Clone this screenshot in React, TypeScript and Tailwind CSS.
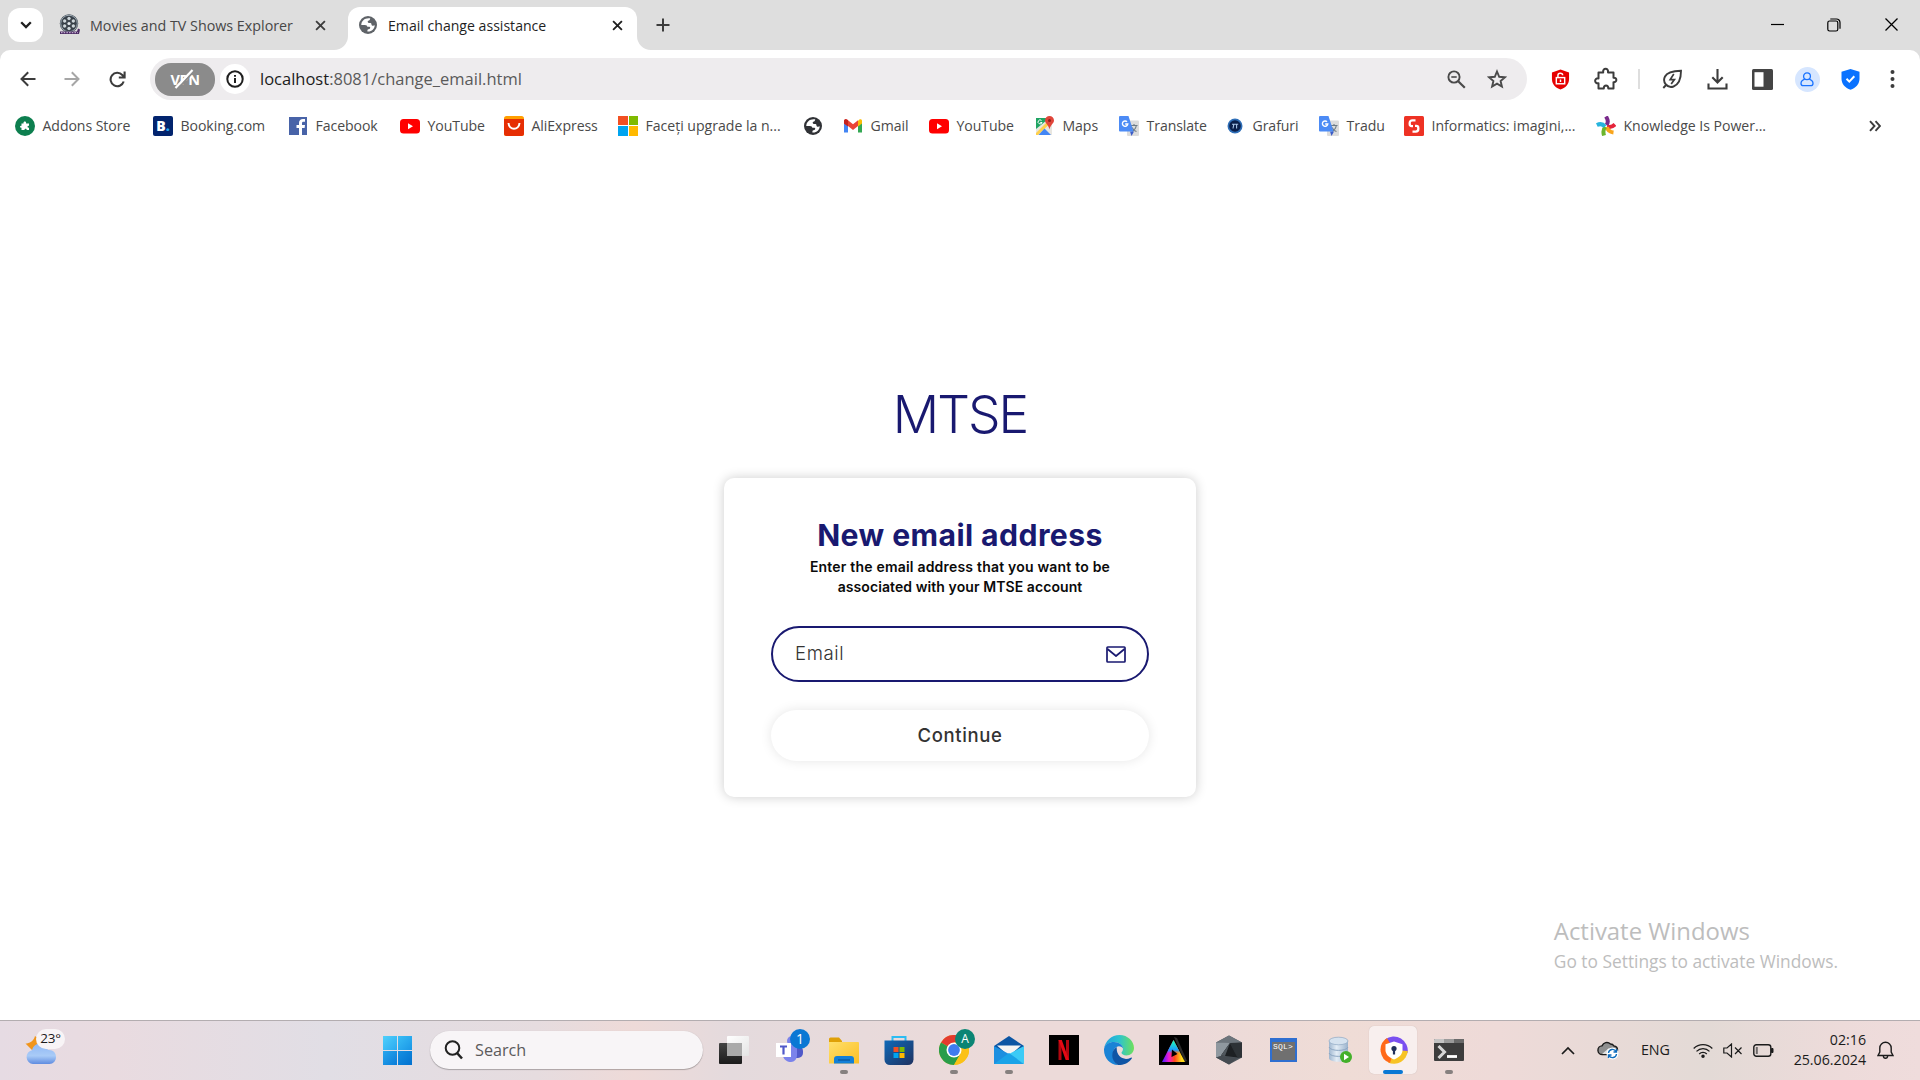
import type { ReactNode } from "react";

function Globe({ color, size }: { color: string; size: number }) {
  return (
    <svg width={size} height={size} viewBox="0 0 20 20">
      <circle cx="10" cy="10" r="10" fill={color} />
      <path d="M12.500 2.600C7 1.600 2.600 5 2.500 10H6.500c2 0 2.500.8 2.700 2h2.300c1.300 0 1.300 2.300 0 2.400-1.700.1-2.200.6-2.200 2.900 4.500.5 8-2.700 8.200-7-1.500.7-3.500.7-3.700-1.200-.1-1.300-.9-1.400-2.300-1.300-2.300.1-2.500-2.500-.5-2.800 1-.1 1.200-1.100 1.500-2.400z" fill="#fff" />
    </svg>
  );
}

function Reel() {
  return (
    <svg width="22" height="22" viewBox="0 0 22 22">
      <circle cx="10" cy="9.500" r="9.200" fill="#3c4650" />
      <circle cx="10" cy="9.500" r="8.300" fill="none" stroke="#a9b6be" strokeWidth=".9" />
      {[30, 90, 150, 210, 270, 330].map((a) => (
        <circle key={a} cx={10 + 5 * Math.cos((a * Math.PI) / 180)} cy={9.5 + 5 * Math.sin((a * Math.PI) / 180)} r="2.100" fill="#cdd6db" stroke="#20262c" strokeWidth=".6" />
      ))}
      <circle cx="10" cy="9.500" r="1.600" fill="#e6ecef" />
      <path d="M1 17.500h17l1-3 2 1-1 4.500H1z" fill="#4b2a63" />
      <path d="M2 18.700h17" stroke="#d9c6e6" strokeWidth="1" strokeDasharray="1.500 1.200" />
    </svg>
  );
}

function Cross({ size, color, w }: { size: number; color: string; w: number }) {
  return (
    <svg width={size} height={size} viewBox="0 0 12 12">
      <path d="M1.200 1.200l9.600 9.600M10.800 1.200L1.200 10.800" stroke={color} strokeWidth={w} fill="none" />
    </svg>
  );
}

function TabStrip() {
  return (
    <div className="flex h-[50px] w-full bg-[#dedede]">
      <div className="mt-2 ml-2 flex h-[34px] w-[35px] items-center justify-center rounded-xl bg-white">
        <svg width="12" height="8" viewBox="0 0 12 8">
          <path d="M1.200 1.200L6 6l4.800-4.800" stroke="#1f1f1f" strokeWidth="2.300" fill="none" />
        </svg>
      </div>
      <div className="flex h-[50px] w-[305px] items-center pl-[16px]">
        <Reel />
        <span className="ml-[9px] w-[216px] pt-[1px] text-[14.3px] text-[#474747]">Movies and TV Shows Explorer</span>
        <span className="ml-[9px]"><Cross size={11} color="#3c3c3c" w={2} /></span>
      </div>
      <div className="relative flex h-[50px] w-[289px] items-center pl-[11px]">
        <div className="absolute top-[7px] left-0 h-[43px] w-[289px] rounded-t-[12px] bg-white" />
        <svg className="absolute bottom-0 -left-[14px]" width="14" height="14" viewBox="0 0 14 14"><path d="M14 0v14H0A14 14 0 0 0 14 0z" fill="#fff" /></svg>
        <svg className="absolute -right-[14px] bottom-0" width="14" height="14" viewBox="0 0 14 14"><path d="M0 0v14h14A14 14 0 0 1 0 0z" fill="#fff" /></svg>
        <span className="relative"><Globe color="#5f6368" size={18} /></span>
        <span className="relative ml-[11px] w-[224px] pt-[1px] text-[14.1px] text-[#1f1f1f]">Email change assistance</span>
        <span className="relative"><Cross size={11} color="#1f1f1f" w={2} /></span>
      </div>
      <div className="ml-[19px] flex items-center">
        <svg width="14" height="14" viewBox="0 0 14 14"><path d="M7 .500v13M.500 7h13" stroke="#3c3c3c" strokeWidth="2" /></svg>
      </div>
      <div className="ml-auto flex items-center pr-[21px] pb-[1px]">
        <svg width="13" height="13" viewBox="0 0 13 13"><path d="M0 6.500h13" stroke="#000" strokeWidth="1.200" /></svg>
        <svg className="ml-[43px]" width="14" height="14" viewBox="0 0 14 14" fill="none" stroke="#000" strokeWidth="1.200">
          <rect x=".800" y="3" width="10" height="10" rx="1.800" />
          <path d="M3.300 1h6.200a3.500 3.500 0 0 1 3.500 3.500v6.200" />
        </svg>
        <span className="ml-[43px]"><Cross size={15} color="#000" w={1} /></span>
      </div>
    </div>
  );
}

function Toolbar() {
  return (
    <div className="flex h-[58px] items-start bg-[#dedede]">
      <div className="flex h-[58px] w-full items-start rounded-t-[10px] bg-white pt-2">
        <div className="flex h-[42px] w-[150px] items-center pl-[20px]">
          <svg width="16" height="16" viewBox="0 0 16 16" fill="none" stroke="#3c3c3c" strokeWidth="2"><path d="M15.500 8H1.700M8.200 1.200L1.500 8l6.700 6.800" /></svg>
          <svg className="ml-[28px]" width="16" height="16" viewBox="0 0 16 16" fill="none" stroke="#a6a6a6" strokeWidth="2"><path d="M.500 8h13.800M7.800 1.200L14.500 8l-6.700 6.800" /></svg>
          <svg className="ml-[29px]" width="17" height="17" viewBox="0 0 17 17" fill="none" stroke="#3c3c3c" strokeWidth="2.100"><path d="M14.700 10.500A6.700 6.700 0 1 1 13.300 4L15.300 6M15.600.500v6H9.800" /></svg>
        </div>
        <div className="flex h-[42px] w-[1377px] items-center rounded-full bg-[#eeecee] pl-[5px]">
          <div className="flex h-[33px] w-[60px] items-center justify-center rounded-[16px] bg-[#8b8b8b]">
            <div className="relative pt-[2px] text-[14.5px] leading-none font-bold tracking-[-0.4px] text-white">
              VPN
              <svg className="absolute -top-[2px] left-[3px]" width="22" height="21" viewBox="0 0 22 21">
                <path d="M4.500 20L21 2" stroke="#8b8b8b" strokeWidth="2" />
                <path d="M2.500 19L19.500 1" stroke="#fff" strokeWidth="2.200" />
              </svg>
            </div>
          </div>
          <div className="ml-[5px] flex h-[30px] w-[30px] items-center justify-center rounded-full bg-white">
            <svg width="18" height="18" viewBox="0 0 18 18" fill="none" stroke="#1f1f1f"><circle cx="9" cy="9" r="7.700" strokeWidth="2" /><path d="M9 8v5M9 5v1.800" strokeWidth="2" /></svg>
          </div>
          <div className="ml-[10px] pt-[1px] text-[16.5px] text-[#5a5a5a]"><span className="text-[#1c1c1c]">localhost</span>:8081/change_email.html</div>
          <svg className="ml-auto" width="19" height="19" viewBox="0 0 19 19" fill="none" stroke="#4a4a4a"><circle cx="7" cy="7" r="5.600" strokeWidth="1.900" /><path d="M11.200 11.200l6.600 6.600" strokeWidth="2.200" /><path d="M4.300 7h5.400" strokeWidth="1.600" /></svg>
          <svg className="mr-[20px] ml-[21px]" width="20" height="20" viewBox="0 0 20 20" fill="none" stroke="#4a4a4a" strokeWidth="1.900"><path d="M10 2.500l2.200 5.300 5.700.500-4.300 3.700 1.300 5.500L10 14.600l-4.900 2.900 1.300-5.500-4.300-3.700 5.700-.500z" /></svg>
        </div>
        <div className="flex h-[42px] flex-1 items-center">
          <svg className="ml-[24px]" width="19" height="21" viewBox="0 0 20 22">
            <path d="M10 .500l9 3v7c0 5.500-4 9.500-9 11-5-1.500-9-5.500-9-11v-7z" fill="#e60000" />
            <rect x="5.600" y="9" width="8.800" height="6.500" fill="none" stroke="#fff" strokeWidth="1.500" />
            <path d="M7.300 9V6.600c0-3 5-3 5 0M10 11v2.500" stroke="#fff" strokeWidth="1.500" fill="none" />
          </svg>
          <svg className="ml-[24px]" width="24" height="24" viewBox="0 0 24 24" fill="none" stroke="#3c3c3c" strokeWidth="2" strokeLinejoin="round">
            <path d="M4.500 5.500h4.700c-.8-5 5.600-5 4.800 0h5.500v5.200c3.800-.3 3.800 4.800 0 4.500v6.300h-5.200c.3-4-4.800-4-4.500 0H4.500v-5.200c-4.500.5-4.500-5.400 0-4.900z" transform="matrix(-1 0 0 1 24 0) matrix(-1 0 0 1 24 0)" />
          </svg>
          <div className="ml-[20px] h-[20px] w-[1.500px] bg-[#dedede]" />
          <svg className="ml-[22px]" width="21" height="21" viewBox="0 0 21 21" fill="none" stroke="#3c3c3c" strokeWidth="1.900">
            <path d="M19 1.800C13 2 5.500 2.500 3 7.500c-3 6 2.500 12 8.500 10C18 15 19 8 19 1.800zM4.500 15.500L1.300 19" />
            <path d="M11.800 5l-3.600 5.600h4.200L9.200 15" strokeWidth="1.700" />
          </svg>
          <svg className="ml-[24px]" width="21" height="21" viewBox="0 0 21 21" fill="none" stroke="#3c3c3c" strokeWidth="2.100"><path d="M10.500 0v13M5.300 8.200l5.200 5.200 5.200-5.200M1.500 14.500v5h18v-5" /></svg>
          <svg className="ml-[24px]" width="21" height="21" viewBox="0 0 21 21"><rect width="21" height="21" rx="1.500" fill="#444" /><rect x="2.500" y="3.200" width="9" height="14.500" fill="#fff" /></svg>
          <div className="ml-[22px] flex h-[25px] w-[25px] items-center justify-center rounded-full bg-[#d6e6ff]">
            <svg width="14" height="15" viewBox="0 0 14 15" fill="none" stroke="#1a73ff" strokeWidth="1.300"><circle cx="7" cy="4.300" r="3.400" /><path d="M4.700 7.200C2 8.200 1 10 1 11.500c0 1.700 1.200 2.200 2.500 2.200h7c1.300 0 2.500-.5 2.500-2.200 0-1.500-1-3.300-3.700-4.300" /></svg>
          </div>
          <svg className="ml-[21px]" width="19" height="21" viewBox="0 0 19 21"><path d="M9.500 0l9 2.800v7c0 5-3.500 9-9 11-5.500-2-9-6-9-11v-7z" fill="#0a72ff" /><path d="M5.500 9.800l2.800 2.800 5-5.300" stroke="#fff" strokeWidth="2" fill="none" /></svg>
          <svg className="ml-[30px]" width="5" height="20" viewBox="0 0 5 20" fill="#3c3c3c"><circle cx="2.500" cy="3" r="2" /><circle cx="2.500" cy="10" r="2" /><circle cx="2.500" cy="17" r="2" /></svg>
        </div>
      </div>
    </div>
  );
}

const YouTube = (
  <svg width="20" height="20" viewBox="0 0 20 20"><rect x="0" y="3" width="20" height="14.500" rx="3.500" fill="#f00" /><path d="M8 7.300l5 3-5 3z" fill="#fff" /></svg>
);
const Translate = (
  <svg width="20" height="20" viewBox="0 0 20 20">
    <rect x="8" y="4.500" width="12" height="15.500" rx="1" fill="#dcdcdc" />
    <path d="M11.500 9.500h7M15 8v1.500M17.300 9.500c-.5 3-2.500 5-4.500 6M13 11.500c1 2 2.500 3.500 4.500 4" stroke="#6c7b85" strokeWidth="1.100" fill="none" />
    <path d="M11 15.500h4L12.500 20z" fill="#3a5bc7" />
    <path d="M1 0h8.500l5 15.500H1a1 1 0 0 1-1-1V1a1 1 0 0 1 1-1z" fill="#4c8bf5" />
    <path d="M8 5.700a2.700 2.700 0 1 0 .8 2.300H6.200" stroke="#fff" strokeWidth="1.400" fill="none" />
  </svg>
);

const bookmarks: { w: string; label: string; icon: ReactNode }[] = [
  { w: "w-[138px]", label: "Addons Store", icon: <svg width="20" height="20" viewBox="0 0 20 20"><circle cx="10" cy="10" r="10" fill="#0d7f4f" /><path d="M6.500 7.500h2c-.4-2.600 3-2.600 2.600 0H14v2.200c-2-.2-2 2.200 0 2v2.300h-2.300c.2-1.800-2.400-1.800-2.200 0h-3v-2.300c-2 .2-2-2.200 0-2z" fill="#fff" /></svg> },
  { w: "w-[135px]", label: "Booking.com", icon: <div className="flex h-5 w-5 items-center justify-center rounded-[2px] bg-[#02246e] text-[14px] leading-none font-extrabold text-white">B<span className="text-[#22a7f2]">.</span></div> },
  { w: "w-[112px]", label: "Facebook", icon: <svg width="20" height="20" viewBox="0 0 20 20"><rect x="1" y="1" width="18" height="18" fill="#4863a8" /><path d="M11 19v-7H8.500V9H11V7c0-2.800 1.700-4 4-4h2v2.800h-1.500c-1.100 0-1.500.5-1.500 1.500V9h3l-.4 3H14v7z" fill="#fff" /></svg> },
  { w: "w-[104px]", label: "YouTube", icon: YouTube },
  { w: "w-[114px]", label: "AliExpress", icon: <svg width="20" height="20" viewBox="0 0 20 20"><rect width="20" height="20" rx="2.500" fill="#ff9f00" /><path d="M0 3h20v14.500a2.500 2.500 0 0 1-2.500 2.500h-15A2.500 2.500 0 0 1 0 17.500z" fill="#e62e04" /><path d="M4.500 7c.5 7.500 10.500 7.500 11 0" stroke="#fff" strokeWidth="2" fill="none" /></svg> },
  { w: "w-[185px]", label: "Faceți upgrade la n...", icon: <div className="grid h-5 w-5 grid-cols-2 gap-[1px]"><i className="bg-[#f25022]" /><i className="bg-[#7fba00]" /><i className="bg-[#00a4ef]" /><i className="bg-[#ffb900]" /></div> },
  { w: "w-[40px]", label: "", icon: <Globe color="#303236" size={18} /> },
  { w: "w-[86px]", label: "Gmail", icon: <svg width="20" height="20" viewBox="0 0 20 20"><path d="M1 4.500v12h4V9z" fill="#4285f4" /><path d="M19 4.500v12h-4V9z" fill="#34a853" /><path d="M15 5v5.500l4-3V5c0-2-2.500-2.500-4 0z" fill="#fbbc04" /><path d="M1 7.500V5c0-2 2.500-2.500 4-.8l5 4 5-4V10l-5 4-5-4z" fill="#ea4335" /><path d="M1 7.500V5c0-2 2.500-2.300 4-.8v6.300z" fill="#c5221f" /></svg> },
  { w: "w-[106px]", label: "YouTube", icon: YouTube },
  { w: "w-[84px]", label: "Maps", icon: <svg width="20" height="20" viewBox="0 0 20 20"><path d="M1 2h12v8L1 19z" fill="#1fa463" /><path d="M1 19V13L12 4l5 5v10z" fill="#e8e6e0" /><path d="M1 17L12 6l2 2.500L3 19H1z" fill="#ffd04b" /><path d="M3.500 19l6-6.500 6.500 6.500z" fill="#4286f5" /><path d="M14.500 0a4.500 4.500 0 0 1 4.500 4.500c0 3-3.500 4-4.500 9-1-5-4.500-6-4.500-9A4.500 4.500 0 0 1 14.500 0z" fill="#e0453a" /><circle cx="14.500" cy="4.500" r="1.500" fill="#8c2119" /><path d="M6.500 4.500a2 2 0 1 0 .5 2H5.300" stroke="#fff" fill="none" /></svg> },
  { w: "w-[106px]", label: "Translate", icon: Translate },
  { w: "w-[94px]", label: "Grafuri", icon: <svg width="20" height="20" viewBox="0 0 20 20"><circle cx="10" cy="10" r="7.500" fill="#2f6fb8" /><circle cx="10" cy="10" r="5.800" fill="#0a1f4a" /><path d="M7 8.300h6.200M8.800 8.300L8 12.500M11.600 8.300v4.200" stroke="#a8c4e6" strokeWidth="1.100" /></svg> },
  { w: "w-[85px]", label: "Tradu", icon: Translate },
  { w: "w-[192px]", label: "Informatics: imagini,...", icon: <svg width="20" height="20" viewBox="0 0 20 20"><rect width="20" height="20" rx="1.500" fill="#ee3224" /><path d="M11.500 4.300H8.300a2.600 2.600 0 0 0-2.600 2.600v1.200a2 2 0 0 0 2 2H9" stroke="#fff" strokeWidth="2.300" fill="none" /><path d="M8.500 15.700h3.200a2.600 2.600 0 0 0 2.600-2.600v-1.200a2 2 0 0 0-2-2H11" stroke="#fff" strokeWidth="2.300" fill="none" /></svg> },
  { w: "w-[190px]", label: "Knowledge Is Power...", icon: <svg width="20" height="20" viewBox="0 0 20 20" strokeWidth="4" fill="none"><path d="M10.500 9c1.700-2 1.700-5-.5-8.500" stroke="#7a2a8c" /><path d="M11 10.500c2.500 1 5.500.500 8-2" stroke="#e5243b" /><path d="M11 11c.5 3 2.500 5 6.500 5.500" stroke="#f9a51b" /><path d="M9.500 11c-2.500 2-2.500 5-1.500 8.500" stroke="#6cb52d" /><path d="M9 10.500C7 8 4 7.500.800 9" stroke="#27b4dd" /></svg> },
];

function Bookmarks() {
  return (
    <div className="flex h-[36px] items-center bg-white pl-[15px] text-[14.1px] text-[#4a4a4a]">
      {bookmarks.map((b, i) => (
        <div key={i} className={`flex shrink-0 items-center gap-[7.5px] whitespace-nowrap ${b.w}`}>
          <div className="flex h-5 w-5 shrink-0 items-center justify-center">{b.icon}</div>
          <span className={b.label.length > 19 ? "tracking-[-0.02px]" : "tracking-[-0.07px]"}>{b.label}</span>
        </div>
      ))}
      <svg className="mr-[39px] ml-auto" width="12" height="12" viewBox="0 0 12 12" fill="none" stroke="#3c3c3c" strokeWidth="1.900"><path d="M1 1.200L5.500 6 1 10.800M6.500 1.200L11 6l-4.500 4.800" /></svg>
    </div>
  );
}

function ChangeEmail() {
  return (
    <main className="flex flex-1 flex-col items-center bg-white font-['Inter',sans-serif]">
      <h1 className="mt-[241px] flex h-[60px] items-center text-[51.5px] leading-none font-[340] tracking-[-2px] text-[#191970]">MTSE</h1>
      <section className="mt-[33px] flex h-[319px] w-[472px] flex-col items-center rounded-[10px] bg-white px-[47px] pt-[39px] shadow-[0_0_12px_rgba(0,0,0,0.2)]">
        <h2 className="h-9 text-[30.2px] leading-9 font-bold tracking-[0.4px] whitespace-nowrap text-[#191970]">New email address</h2>
        <p className="mt-[4px] text-center text-[14px] leading-5 font-semibold tracking-[0.2px] whitespace-nowrap text-[#0a0a0a]">
          Enter the email address that you want to be<br /><span className="tracking-[0.08px]">associated with your MTSE account</span>
        </p>
        <div className="mt-[29px] flex h-[56px] w-[378px] shrink-0 items-center justify-between rounded-full border-2 border-[#191970] pr-[21px] pl-[22px] text-[18.600px] font-light tracking-[0.6px] text-[#333]">
          Email
          <svg width="20" height="17" viewBox="0 0 20 17" fill="none" stroke="#191970" strokeWidth="1.700" strokeLinejoin="round"><rect x="1" y="1" width="18" height="15" rx=".8" /><path d="M1.500 3L10 10l8.500-7" /></svg>
        </div>
        <button className="mt-[28px] h-[51px] w-[378px] shrink-0 rounded-full bg-white text-[18.500px] font-medium tracking-[0.6px] text-[#333] shadow-[0_0_12px_rgba(0,0,0,0.1)]">Continue</button>
      </section>
      <aside className="mt-[119px] mr-[82px] self-end font-['Open_Sans',sans-serif] text-[#bdbdbd]">
        <div className="w-[284px] text-[23.900px] leading-[30px]">Activate Windows</div>
        <div className="mt-[3px] text-[17.350px] leading-[24px] whitespace-nowrap">Go to Settings to activate Windows.</div>
      </aside>
    </main>
  );
}

const apps: { icon: ReactNode; badge?: ReactNode; run?: boolean; active?: boolean }[] = [
  { icon: <svg width="30" height="30" viewBox="0 0 30 30"><defs><linearGradient id="tv" x2="0" y2="1"><stop stopColor="#444" /><stop offset="1" stopColor="#1b1b1b" /></linearGradient><linearGradient id="tw" x2="1" y2="1"><stop stopColor="#fff" /><stop offset="1" stopColor="#e4e4e4" /></linearGradient></defs><rect y="8" width="23" height="21" rx="1" fill="url(#tv)" /><rect x="8" y="1" width="22" height="20" rx="1" fill="url(#tw)" /><path d="M8 8h15v13H8z" fill="#aaa" /></svg> },
  {
    icon: <svg width="30" height="30" viewBox="0 0 30 30"><circle cx="18" cy="6" r="5" fill="#7b83eb" /><rect x="17" y="11" width="12" height="12" rx="5" fill="#5059c9" /><path d="M9 11h14v9c0 4-2.500 7-6 7s-7-2-8-6z" fill="#7b83eb" /><rect x="2" y="8" width="15" height="14" fill="#fff" /><path d="M6 11.500h7M9.500 11.500v8" stroke="#5059c9" strokeWidth="2.200" /></svg>,
    badge: <div className="absolute top-[8px] left-[29px] flex h-5 w-5 items-center justify-center rounded-full bg-[#0a78d4] text-[14px] leading-none text-white">1</div>,
  },
  { run: true, icon: <svg width="30" height="30" viewBox="0 0 30 30"><defs><linearGradient id="fo" x2="1" y2="1"><stop stopColor="#ffdf6b" /><stop offset="1" stopColor="#fbbf24" /></linearGradient></defs><path d="M0 4a1.500 1.500 0 0 1 1.500-1.500H10l3 3.500v4H0z" fill="#dfa007" /><path d="M0 7h29a1 1 0 0 1 1 1v20.500H0z" fill="url(#fo)" /><path d="M5 28.500V24a3 3 0 0 1 3-3h14a3 3 0 0 1 3 3v4.500z" fill="#1380d8" /><path d="M9 25h12" stroke="#0b5aa3" strokeWidth="1.400" /></svg> },
  { icon: <svg width="30" height="30" viewBox="0 0 30 30"><defs><linearGradient id="st" x2="1" y2="1"><stop stopColor="#0f69b8" /><stop offset="1" stopColor="#1f3260" /></linearGradient></defs><path d="M8.500 6V2h13v4" stroke="#2cbcf2" strokeWidth="2" fill="none" /><path d="M.500 5.500h29v19a5.500 5.500 0 0 1-5.500 5.500H6a5.500 5.500 0 0 1-5.500-5.500z" fill="url(#st)" /><path d="M9.500 12h5v5h-5z" fill="#f25022" /><path d="M15.500 12h5v5h-5z" fill="#7fba00" /><path d="M9.500 18h5v5h-5z" fill="#00a4ef" /><path d="M15.500 18h5v5h-5z" fill="#ffb900" /></svg> },
  {
    run: true,
    icon: <svg width="30" height="30" viewBox="0 0 30 30"><circle cx="15" cy="15" r="15" fill="#fbc116" /><path d="M15 15L2 7.500A15 15 0 0 1 28 7.500H15z" fill="#e33b2e" /><path d="M2 7.500A15 15 0 0 0 15 30l6.500-11.300L15 15z" fill="#2a9d4a" /><path d="M15 7.500h13A15 15 0 0 1 15 30l6.500-11.200z" fill="#fbc116" /><circle cx="15" cy="15" r="7.500" fill="#fff" /><circle cx="15" cy="15" r="5.900" fill="#3f7cf0" /></svg>,
    badge: <div className="absolute top-[8px] left-[29px] flex h-5 w-5 items-center justify-center rounded-full bg-[#0b8574] text-[12px] leading-none text-white">A</div>,
  },
  { run: true, icon: <svg width="30" height="30" viewBox="0 0 30 30"><path d="M0 11L15 1l15 10v6H0z" fill="#0b55a4" /><path d="M3 10.500h24L15 21z" fill="#f4f4f4" /><path d="M0 11l15 8v10H0z" fill="#1c8fe0" /><path d="M30 11L14 19.500 30 29z" fill="#3ccbf6" /><path d="M0 29l15-11 15 11z" fill="#1aa3e8" /></svg> },
  { icon: <svg width="30" height="30" viewBox="0 0 30 30"><rect width="30" height="30" fill="#000" /><path d="M11 5v20M18.500 5v20" stroke="#b1060f" strokeWidth="3" /><path d="M9.500 5h3.300l7.200 20h-3.300z" fill="#e50914" /></svg> },
  { icon: <svg width="30" height="30" viewBox="0 0 30 30"><defs><linearGradient id="ea" x1="0" y1=".4" x2="1" y2=".4"><stop stopColor="#1f9fe0" /><stop offset=".5" stopColor="#2cc3cf" /><stop offset="1" stopColor="#6fe05a" /></linearGradient></defs><path d="M0 14C1 6 7.500 0 15.500 0 24 0 30 6.500 30 13c0 4.500-3.500 7.500-7.500 7.500-3 0-5-1.500-5-2.700 0-1 1.500-1.300 1.500-4C19 10 15 7 10 7 5 7 1 10 0 14z" fill="url(#ea)" /><path d="M0 14C1 9.500 5 7 10 7c5 0 9 3 9 6.500-1.500-2-4-3-6.500-1.500C7 15.500 8 25 14 30 6 30 0 23 0 15z" fill="#1a83d6" /><path d="M12.800 12C7 15 6 25 14 30c6 .4 11-2.200 13.800-6.500.5-.8-.3-1.200-1-.8-7 3.500-15-1-14-10.700z" fill="#0f55a5" /></svg> },
  { icon: <svg width="30" height="30" viewBox="0 0 30 30"><defs><linearGradient id="pr" x2="1"><stop offset=".05" stopColor="#5a1bff" /><stop offset=".3" stopColor="#f21bd0" /><stop offset=".55" stopColor="#ff4a1b" /><stop offset=".85" stopColor="#ffd91b" /></linearGradient><linearGradient id="ps" x2="0" y2="1"><stop offset=".1" stopColor="#1bf0c0" /><stop offset=".45" stopColor="#1b9cff" /><stop offset=".6" stopColor="#1b9cff" stopOpacity="0" /></linearGradient></defs><rect width="30" height="30" fill="#000" /><path d="M15 2l3 1 10 23-2 1z" fill="#2b2b2b" /><path d="M14.500 5L26 27H3z" fill="url(#pr)" /><path d="M14.500 5L26 27H3z" fill="url(#ps)" /><path d="M13 14.500l5.500 4.500-6 3z" fill="#000" /></svg> },
  { icon: <svg width="30" height="30" viewBox="0 0 30 30"><path d="M15 .500l13 7v15L15 29.500 2 22.500v-15z" fill="#4d545b" /><path d="M15 .500l13 7-12 1L2 7.500z" fill="#6d757c" /><path d="M2 7.500L16 8 7 21l-5 1.500z" fill="#8f989f" /><path d="M2 22.500L7 21l16.500 2L15 29.500z" fill="#454b51" /><path d="M28 7.500v15L23.500 23 16 8z" fill="#2d3236" /><path d="M16 8l7.500 14.500L7 20.500z" fill="#1d2023" /><path d="M16 8L7 20.500l4 .5z" fill="#50575d" /></svg> },
  { icon: <div className="flex h-[24px] w-[27px] flex-col border-2 border-t-[4px] border-[#2f6fd0] bg-[#707070] pl-px font-['Liberation_Mono',monospace] text-[8px] leading-[10px] tracking-[0.2px] text-white">SQL&gt;</div> },
  { icon: <svg width="30" height="30" viewBox="0 0 30 30"><defs><linearGradient id="db" x2="1"><stop stopColor="#9fb6cf" /><stop offset=".4" stopColor="#e3edf6" /><stop offset="1" stopColor="#9ab2cc" /></linearGradient></defs><path d="M5 6v17c0 5 19 5 19 0V6z" fill="url(#db)" /><ellipse cx="14.500" cy="6" rx="9.500" ry="3.800" fill="#d5e2ef" stroke="#8ca6c2" strokeWidth=".7" /><path d="M5 12c1 4.500 18 4.500 19 0M5 18c1 4.500 18 4.500 19 0" stroke="#8ca6c2" fill="none" /><circle cx="22" cy="22" r="6" fill="#43b02a" /><path d="M20 18.800l5 3.200-5 3.200z" fill="#fff" /></svg> },
  { active: true, icon: <svg width="28" height="28" viewBox="0 0 28 28"><path d="M14 14L5 3.500A14 14 0 0 1 27.500 17z" fill="#7a4ff0" /><path d="M14 14l13.800 1A14 14 0 0 1 8 26.500z" fill="#f7c325" /><path d="M14 14l-4 13A14 14 0 0 1 7 2z" fill="#ff6a1a" /><path d="M14 5.500l8.500 2.700v6c0 4-3.500 7.300-8.500 9.300-5-2-8.500-5.300-8.500-9.300v-6z" fill="#fff" /><circle cx="14" cy="12.500" r="2.600" fill="#20305c" /><path d="M12.900 13h2.200v5.500h-2.200z" fill="#20305c" /></svg> },
  { run: true, icon: <svg width="30" height="30" viewBox="0 0 30 30"><rect y="4" width="30" height="22" rx="1" fill="#3d3d3d" /><path d="M0 8V5a1 1 0 0 1 1-1h9v4z" fill="#c4c4c4" /><path d="M10 4h10v4H10z" fill="#9b9b9b" /><path d="M20 4h9a1 1 0 0 1 1 1v3H20z" fill="#6a6a6a" /><path d="M4.500 11l6 6-6 6" stroke="#d6d6d6" strokeWidth="3" fill="none" /><path d="M13 21.500h10" stroke="#fff" strokeWidth="2.800" /></svg> },
];

function Taskbar() {
  return (
    <footer className="flex h-[60px] items-stretch border-t border-[#b3adb0] bg-[linear-gradient(90deg,#e6dbe3_0%,#e9dbe0_6%,#e1dee5_17%,#e6dcdf_28%,#eedad8_33%,#e4dadd_38%,#ecdad9_52%,#ecdad9_62%,#efdcd6_70%,#eedad8_78%,#e3dad6_89%,#eddbda_96%,#efdcdc_100%)] pb-px text-[#1b1b1b]">
      <div className="flex w-[383px] items-center pl-[25px]">
        <div className="relative">
          <svg width="32" height="30" viewBox="0 0 32 30">
            <defs><linearGradient id="cl" x2="0" y2="1"><stop stopColor="#8fb8f5" /><stop offset=".6" stopColor="#a9cbf7" /><stop offset="1" stopColor="#5f8ce0" /></linearGradient></defs>
            <path d="M.500 8.500c4 0 8-2 9.500-7.500l8 6-9 10z" fill="#f0951c" />
            <path d="M8 29a7 7 0 0 1-1-13.800C8.500 9.500 14 7 18.500 9.500c2.500 1.200 4 3.300 4.300 5.500 5.500-.5 8.200 3 8.200 7 0 4-2.800 7-6.500 7z" fill="url(#cl)" />
          </svg>
          <div className="absolute -top-[6px] left-[11px] flex h-[20px] w-[29px] items-center justify-center rounded-full bg-[#f8f4f6] text-[13.500px] leading-none tracking-[-0.3px]">23°</div>
        </div>
      </div>
      <div className="grid h-[29px] w-[29px] grid-cols-2 gap-[1px] self-center">
        <i className="bg-gradient-to-br from-[#4fd0fb] to-[#2aaaf0]" /><i className="bg-gradient-to-br from-[#38bdf5] to-[#1a97e6]" /><i className="bg-gradient-to-br from-[#27a7ee] to-[#0a7cd8]" /><i className="bg-gradient-to-br from-[#1590e2] to-[#0371cf]" />
      </div>
      <div className="ml-[18px] flex h-[38px] w-[273px] items-center self-center rounded-full bg-[#f8f5f7] pl-[14px] shadow-[0_1px_1px_rgba(0,0,0,0.25),0_0_1px_rgba(0,0,0,0.15)]">
        <svg width="19" height="20" viewBox="0 0 19 20" fill="none" stroke="#222" strokeWidth="2"><circle cx="8.500" cy="8" r="6.800" /><path d="M13 13l5 5.500" strokeWidth="2.600" /></svg>
        <span className="ml-[12px] pt-[1px] text-[16.200px] text-[#5c5a5b]">Search</span>
      </div>
      <div className="ml-[3px] flex">
        {apps.map((a, i) => (
          <div key={i} className="relative flex w-[55px] items-center justify-center">
            {a.active && <div className="absolute top-[5px] left-[3px] h-[48px] w-[48px] rounded-[5px] bg-[#f8efee] shadow-[0_0_1px_rgba(0,0,0,0.2)]" />}
            <div className="relative">{a.icon}</div>
            {a.badge}
            {a.run && <div className="absolute top-[49px] left-[24px] h-[4px] w-[8px] rounded-full bg-[#86807f]" />}
            {a.active && <div className="absolute top-[49px] left-[17px] h-[4px] w-[20px] rounded-full bg-[#0a78d4]" />}
          </div>
        ))}
      </div>
      <div className="ml-[85px] flex items-center">
        <svg width="14" height="9" viewBox="0 0 14 9"><path d="M1 8l6-6 6 6" stroke="#1b1b1b" strokeWidth="1.700" fill="none" /></svg>
        <svg className="ml-[22px]" width="22" height="20" viewBox="0 0 22 20">
          <path d="M5.500 14.500a4.300 4.300 0 0 1-.5-8.600C6.500 2.500 10.500 1.200 13.500 4c1.600 0 2.800.8 3.500 2 2 .2 3.500 1.800 3.500 4s-1.500 4.500-4 4.500z" fill="#8f8f8f" stroke="#1b1b1b" strokeWidth="1.400" />
          <path d="M5 14l7-6 4 6z" fill="#e0e0e0" />
          <circle cx="15.500" cy="13.500" r="6" fill="#fff" />
          <path d="M11.500 13a4 4 0 0 1 7.500-1.500M19.500 9v3h-3M19.500 14a4 4 0 0 1-7.500 1.500M11.500 18v-3h3" stroke="#0f6cbd" strokeWidth="1.400" fill="none" />
        </svg>
        <span className="ml-[22px] w-[30px] text-[14.300px] tracking-[-0.1px]">ENG</span>
        <svg className="ml-[22px]" width="20" height="15" viewBox="0 0 20 15" fill="none" stroke="#1b1b1b" strokeWidth="1.300"><path d="M.700 5.500a13.200 13.200 0 0 1 18.600 0M3.500 8.400a9.200 9.200 0 0 1 13 0M6.200 11a5.400 5.400 0 0 1 7.600 0" /><circle cx="10" cy="13.200" r="1.100" fill="#1b1b1b" /></svg>
        <svg className="ml-[10px]" width="20" height="15" viewBox="0 0 20 15" fill="none" stroke="#1b1b1b" strokeWidth="1.200"><path d="M.800 5v5h3.200l4.500 4V1L4 5zM12 4.500l6.500 6.500M18.500 4.500L12 11" /></svg>
        <svg className="ml-[10px]" width="21" height="13" viewBox="0 0 21 13"><rect x=".800" y=".800" width="17" height="11.400" rx="2.500" fill="none" stroke="#1b1b1b" strokeWidth="1.400" /><rect x="2.800" y="3" width="2" height="7" fill="#6f6b6b" /><path d="M18.500 4.500h1.500v4h-1.500z" fill="#1b1b1b" stroke="#1b1b1b" /></svg>
      </div>
      <div className="ml-auto flex items-center pr-[26px]">
        <div className="pb-px text-right text-[14.200px] leading-[20px]"><div>02:16</div><div>25.06.2024</div></div>
        <svg className="ml-[11px]" width="17" height="19" viewBox="0 0 17 19" fill="none" stroke="#1b1b1b" strokeWidth="1.400"><path d="M1 14.500l1.800-3.500V7a5.700 5.700 0 0 1 11.400 0v4l1.800 3.500zM6.300 15c.3 3 4.100 3 4.400 0" /></svg>
      </div>
    </footer>
  );
}

export default function App() {
  return (
    <div className="flex h-[1080px] w-[1920px] flex-col overflow-hidden bg-white font-['Open_Sans',sans-serif] leading-normal">
      <TabStrip />
      <Toolbar />
      <Bookmarks />
      <ChangeEmail />
      <Taskbar />
    </div>
  );
}
